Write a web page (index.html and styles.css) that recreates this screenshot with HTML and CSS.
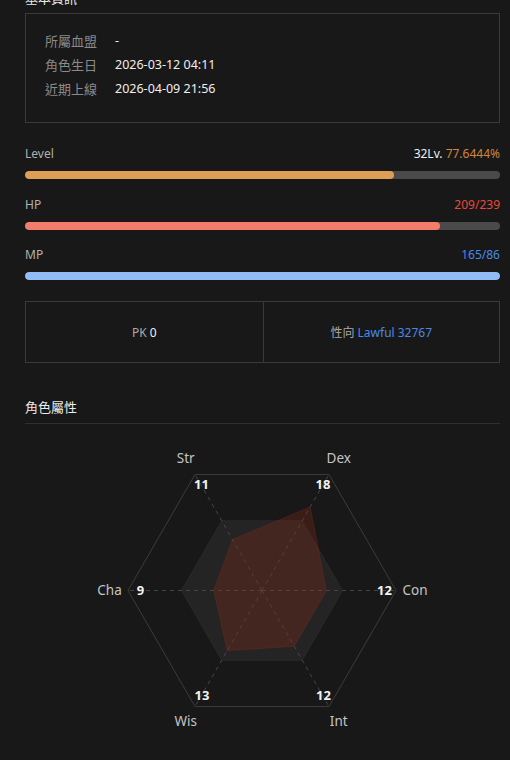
FILE: index.html
```html
<!DOCTYPE html>
<html lang="zh-Hant">
<head>
<meta charset="utf-8">
<title>角色資訊</title>
<link rel="stylesheet" href="styles.css">
</head>
<body>
<main class="page">
  <section class="basic">
    <h2 class="section-title plain">基本資訊</h2>
    <div class="info-box">
      <dl class="info-list">
        <dt>所屬血盟</dt><dd>-</dd>
        <dt>角色生日</dt><dd>2026-03-12 04:11</dd>
        <dt>近期上線</dt><dd>2026-04-09 21:56</dd>
      </dl>
    </div>
  </section>

  <section class="stats">
    <div class="stat">
      <div class="stat-head"><span class="stat-label">Level</span><span class="stat-value"><span class="lv">32Lv.</span> <span class="exp">77.6444%</span></span></div>
      <div class="track"><div class="fill fill-exp" style="width:77.6444%"></div></div>
    </div>
    <div class="stat">
      <div class="stat-head"><span class="stat-label">HP</span><span class="stat-value hp">209/239</span></div>
      <div class="track"><div class="fill fill-hp" style="width:87.45%"></div></div>
    </div>
    <div class="stat">
      <div class="stat-head"><span class="stat-label">MP</span><span class="stat-value mp">165/86</span></div>
      <div class="track"><div class="fill fill-mp" style="width:100%"></div></div>
    </div>
  </section>

  <div class="pk-box">
    <div class="pk-cell"><span class="muted">PK</span>&nbsp;<span class="strong">0</span></div>
    <div class="pk-cell"><span class="muted">性向</span>&nbsp;<span class="lawful">Lawful 32767</span></div>
  </div>

  <section class="attrs">
    <h2 class="section-title ruled">角色屬性</h2>
    <svg class="radar" width="475" height="336" viewBox="0 0 475 336" xmlns="http://www.w3.org/2000/svg">
      <polygon class="hex-inner" points="317.4,166.5 277.2,236.13 196.8,236.13 156.6,166.5 196.8,96.87 277.2,96.87"/>
      <polygon class="hex-outer" points="371,166.5 304,282.55 170,282.55 103,166.5 170,50.45 304,50.45"/>
      <g class="axes">
        <line x1="237" y1="166.5" x2="371" y2="166.5"/>
        <line x1="237" y1="166.5" x2="304" y2="282.55"/>
        <line x1="237" y1="166.5" x2="170" y2="282.55"/>
        <line x1="237" y1="166.5" x2="103" y2="166.5"/>
        <line x1="237" y1="166.5" x2="170" y2="50.45"/>
        <line x1="237" y1="166.5" x2="304" y2="50.45"/>
      </g>
      <polygon class="data" points="207.52,115.44 285.24,82.95 301.32,166.5 269.16,222.2 202.16,226.84 188.76,166.5"/>
      <g class="axis-names">
        <text x="160.75" y="33.6">Str</text>
        <text x="313.75" y="33.6">Dex</text>
        <text x="390" y="165.7">Con</text>
        <text x="313.75" y="297.2">Int</text>
        <text x="160.75" y="297.2">Wis</text>
        <text x="84.5" y="165.7">Cha</text>
      </g>
      <g class="axis-values">
        <text x="176.5" y="60.4">11</text>
        <text x="298" y="60.4">18</text>
        <text x="359.5" y="165.9">12</text>
        <text x="298.5" y="271.4">12</text>
        <text x="177" y="271.4">13</text>
        <text x="115.5" y="165.9">9</text>
      </g>
    </svg>
  </section>
</main>
</body>
</html>
```

FILE: styles.css
```css
* {
  box-sizing: border-box;
}

html,
body {
  margin: 0;
  background: #181818;
  overflow: hidden;
}

body {
  font-family: "Noto Sans", "Noto Sans CJK TC", sans-serif;
  color: #e6e6e6;
}

.page {
  padding: 0 10px 0 25px;
  margin-top: -12px;
}

.section-title {
  margin: 0;
  font-size: 13px;
  line-height: 20px;
  font-weight: 400;
  color: #ececec;
  font-family: "Noto Sans CJK TC", "Noto Sans", sans-serif;
}

.section-title.plain {
  margin-bottom: 5px;
}

.section-title.ruled {
  margin-top: 34px;
  padding-bottom: 6px;
  border-bottom: 1px solid #2f2f2f;
}

.info-box {
  border: 1px solid #3a3a3a;
  padding: 15px 19px 21px;
}

.info-list {
  display: grid;
  grid-template-columns: 70px 1fr;
  margin: 0;
  font-size: 13px;
  line-height: 24px;
}

.info-list dt {
  color: #8a8a8a;
  font-family: "Noto Sans CJK TC", "Noto Sans", sans-serif;
}

.info-list dd {
  margin: 0;
  color: #efefef;
  font-size: 12.5px;
}

.stats {
  margin-top: 23px;
}

.stat + .stat {
  margin-top: 17.5px;
}

.stat-head {
  display: flex;
  justify-content: space-between;
  font-size: 12px;
  line-height: 16px;
  margin-bottom: 9px;
}

.stat-label {
  color: #b0b0b0;
}

.lv {
  color: #f0f0f0;
}

.exp {
  color: #d4853a;
}

.hp {
  color: #e8493b;
}

.mp {
  color: #4b88e6;
}

.track {
  height: 8px;
  border-radius: 4px;
  background: #4a4a4a;
  overflow: hidden;
}

.fill {
  height: 100%;
  border-radius: 4px;
}

.fill-exp {
  background: #de9e55;
}

.fill-hp {
  background: #f47c6b;
}

.fill-mp {
  background: #90bdf5;
}

.pk-box {
  margin-top: 21px;
  display: grid;
  grid-template-columns: 1fr 1fr;
  height: 62px;
  border: 1px solid #3a3a3a;
}

.pk-cell {
  display: flex;
  align-items: center;
  justify-content: center;
  font-size: 12px;
}

.pk-cell + .pk-cell {
  border-left: 1px solid #3a3a3a;
}

.muted {
  color: #a8a8a8;
  font-family: "Noto Sans", "Noto Sans CJK TC", sans-serif;
}

.strong {
  color: #f0f0f0;
}

.lawful {
  color: #4b88e6;
}

.radar {
  display: block;
}

.hex-inner {
  fill: #242424;
  stroke: #2a2a2a;
  stroke-width: 1;
}

.hex-outer {
  fill: none;
  stroke: #3c3c3c;
  stroke-width: 1;
}

.axes line {
  stroke: #454545;
  stroke-width: 1;
  stroke-dasharray: 4 4;
}

.data {
  fill: rgba(150, 42, 22, 0.28);
  stroke: rgba(150, 50, 30, 0.25);
  stroke-width: 1;
}

.axis-names text {
  fill: #c4c4c4;
  font-size: 13.5px;
  text-anchor: middle;
  dominant-baseline: central;
}

.axis-values text {
  fill: #f2f2f2;
  font-size: 13px;
  font-weight: 700;
  text-anchor: middle;
  dominant-baseline: central;
}
```
